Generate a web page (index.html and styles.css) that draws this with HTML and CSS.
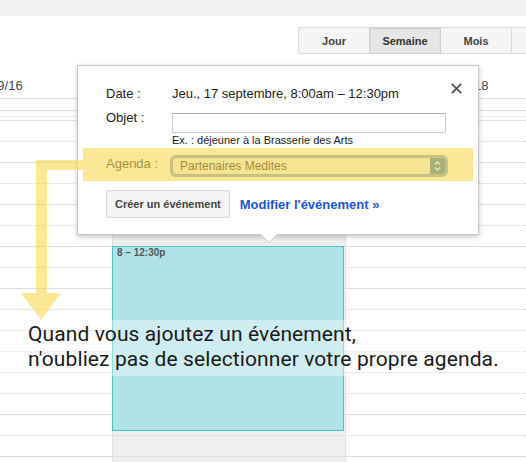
FILE: index.html
```html
<!DOCTYPE html>
<html lang="fr">
<head>
<meta charset="utf-8">
<title>Agenda</title>
<link rel="stylesheet" href="styles.css">
</head>
<body>
<div class="page">
  <div class="topbar"></div>
  <div class="toolbar">
    <div class="btn">Jour</div>
    <div class="btn active">Semaine</div>
    <div class="btn">Mois</div>
    <div class="btn"></div>
  </div>

  <div class="cal">
    <div class="dayheads">
      <div class="dh">Lun. 9/16</div>
      <div class="dh"></div>
      <div class="dh">Mer. 9/18</div>
    </div>
    <div class="allday"></div>
    <div class="sep1"></div>
    <div class="sep2"></div>
    <div class="grid">
      <div class="slots">
        <div class="slot"></div><div class="slot"></div>
        <div class="slot"></div><div class="slot"></div>
        <div class="slot"></div><div class="slot"></div>
        <div class="slot"></div><div class="slot"></div>
        <div class="slot"></div><div class="slot"></div>
        <div class="slot"></div><div class="slot"></div>
        <div class="slot"></div><div class="slot"></div>
        <div class="slot"></div><div class="slot"></div>
        <div class="slot"></div><div class="slot"></div>
      </div>
      <div class="event">8 – 12:30p</div>
    </div>
  </div>

  <div class="popup">
    <svg class="close" viewBox="0 0 11 11" width="11" height="11"><path d="M0.8 0.8 L10.2 10.2 M10.2 0.8 L0.8 10.2" stroke="#555" stroke-width="1.8" fill="none"/></svg>
    <div class="prow">
      <div class="lbl">Date :</div>
      <div class="val">Jeu., 17 septembre, 8:00am – 12:30pm</div>
    </div>
    <div class="prow r-obj">
      <div class="lbl">Objet :</div>
      <div class="input"></div>
    </div>
    <div class="prow r-ex">
      <div class="hint">Ex. : déjeuner à la Brasserie des Arts</div>
    </div>
    <div class="prow r-agenda">
      <div class="lbl lbl-agenda">Agenda :</div>
      <div class="select">
        <span class="sel-text">Partenaires Medites</span>
        <span class="sel-arrow">
          <svg viewBox="0 0 9 14" width="9" height="14"><path d="M2 5.5 L4.5 3 L7 5.5 M2 8.5 L4.5 11 L7 8.5" stroke="#fff" stroke-width="1.4" fill="none"/></svg>
        </span>
      </div>
    </div>
    <div class="r-actions">
      <div class="create">Créer un événement</div>
      <div class="edit">Modifier l'événement »</div>
    </div>
  </div>

  <div class="caption">Quand vous ajoutez un événement,<br>n'oubliez pas de selectionner votre propre agenda.</div>

  <svg class="annot" viewBox="0 0 526 462" width="526" height="462">
    <g opacity="0.6" fill="#f7d950">
      <path d="M83 148 H473 V181 H83 V170 H47 V293 H61 L41 320 L21 293 H36 V160 H83 Z"/>
    </g>
  </svg>
</div>
</body>
</html>
```
FILE: styles.css
```css
html, body {
  margin: 0;
  padding: 0;
}
body {
  width: 526px;
  height: 462px;
  overflow: hidden;
  background: #fff;
  font-family: "Liberation Sans", Arial, sans-serif;
  color: #222;
}
.page {
  position: relative;
  width: 526px;
  height: 462px;
  overflow: hidden;
}
.topbar {
  height: 16px;
  background: #f1f1f1;
}
.toolbar {
  display: flex;
  height: 38px;
  box-sizing: border-box;
  padding: 11px 0 0 298px;
}
.btn {
  flex: none;
  width: 72px;
  height: 27px;
  box-sizing: border-box;
  border: 1px solid #dcdcdc;
  background: #f5f5f5;
  font-size: 11px;
  font-weight: bold;
  color: #444;
  display: flex;
  align-items: center;
  justify-content: center;
}
.btn + .btn {
  margin-left: -1px;
}
.btn.active {
  position: relative;
  z-index: 1;
  background: #e6e6e6;
  border-color: #cfcfcf;
  box-shadow: inset 0 1px 2px rgba(0, 0, 0, 0.1);
  color: #333;
}

.cal {
  margin-left: -121px;
  width: 699px;
}
.dayheads {
  display: flex;
  align-items: flex-end;
  height: 45px;
  box-sizing: border-box;
  padding-bottom: 5px;
  border-bottom: 1px solid #dddddd;
}
.dh {
  width: 233px;
  height: 15px;
  text-align: center;
  font-size: 13px;
  line-height: 15px;
  color: #444;
}
.allday {
  height: 12px;
  box-sizing: border-box;
  border-bottom: 1px solid #dddddd;
}
.sep1 {
  height: 6px;
  box-sizing: border-box;
  border-bottom: 1px solid #ebebeb;
}
.sep2 {
  height: 4px;
  box-sizing: border-box;
  border-bottom: 1px solid #dddddd;
}
.grid {
  position: relative;
  background: linear-gradient(to right,
    transparent 0, transparent 233px,
    #e2e2e2 233px, #e2e2e2 234px,
    #efefef 234px, #efefef 466px,
    #e2e2e2 466px, #e2e2e2 467px,
    transparent 467px);
}
.slot {
  height: 21px;
  box-sizing: border-box;
  border-bottom: 1px dotted #d4d4d4;
}
.slot:nth-child(even) {
  border-bottom: 1px solid #dedede;
}
.event {
  position: absolute;
  left: 233px;
  top: 125px;
  width: 232px;
  height: 185px;
  box-sizing: border-box;
  background: #b0e2e7;
  border: 1px solid #3fc7c0;
  padding: 0 4px;
  font-size: 10px;
  line-height: 11px;
  font-weight: bold;
  color: #555;
}

.popup {
  position: absolute;
  left: 77px;
  top: 65px;
  width: 402px;
  height: 170px;
  box-sizing: border-box;
  background: #fff;
  border: 1px solid #c6c6c6;
  box-shadow: 0 2px 5px rgba(0, 0, 0, 0.22);
  padding: 20px 0 0 28px;
}
.popup::before,
.popup::after {
  content: "";
  position: absolute;
  left: 182px;
  border-left: 9px solid transparent;
  border-right: 9px solid transparent;
}
.popup::before {
  bottom: -9px;
  border-top: 9px solid #c6c6c6;
}
.popup::after {
  bottom: -8px;
  border-top: 9px solid #fff;
}
.close {
  position: absolute;
  right: 16px;
  top: 17px;
}
.prow {
  display: grid;
  grid-template-columns: 66px 274px;
}
.lbl, .val {
  font-size: 13px;
  line-height: 16px;
  color: #222;
}
.r-obj {
  margin-top: 8px;
}
.input {
  margin-top: 3px;
  height: 20px;
  box-sizing: border-box;
  border: 1px solid #cdcdcd;
  border-top-color: #b0b0b0;
  background: #fff;
}
.r-ex {
  margin-top: 1px;
}
.hint {
  grid-column: 2;
  font-size: 11px;
  line-height: 13px;
  color: #222;
}
.r-agenda {
  margin-top: 10px;
}
.lbl-agenda {
  margin-top: -1px;
}
.select {
  height: 18px;
  box-sizing: border-box;
  border: 1px solid #8c9aa8;
  border-radius: 4px;
  box-shadow: 0 0 0 2px #7aa4e0;
  background: #f4f4f4;
  display: flex;
  align-items: center;
  overflow: hidden;
}
.sel-text {
  padding-left: 7px;
  font-size: 12px;
  color: #111;
}
.sel-arrow {
  margin-left: auto;
  width: 15px;
  height: 100%;
  background: #2f75c4;
  display: flex;
  align-items: center;
  justify-content: center;
}
.r-actions {
  margin-top: 15px;
  display: flex;
  align-items: center;
}
.create {
  height: 28px;
  box-sizing: border-box;
  padding: 0 8px;
  border: 1px solid #d9d9d9;
  border-radius: 2px;
  background: #f4f4f4;
  font-size: 11px;
  font-weight: bold;
  color: #444;
  display: flex;
  align-items: center;
}
.edit {
  margin-left: 10px;
  font-size: 13px;
  font-weight: bold;
  color: #2256cc;
}

.caption {
  position: absolute;
  left: 0;
  top: 320px;
  width: 526px;
  height: 56px;
  box-sizing: border-box;
  padding: 2px 0 0 28px;
  background: rgba(255, 255, 255, 0.4);
  font-family: Roboto, "Liberation Sans", sans-serif;
  font-size: 21px;
  line-height: 25px;
  letter-spacing: 0.1px;
  color: #1a1a1a;
}
.annot {
  position: absolute;
  left: 0;
  top: 0;
  pointer-events: none;
}
```
